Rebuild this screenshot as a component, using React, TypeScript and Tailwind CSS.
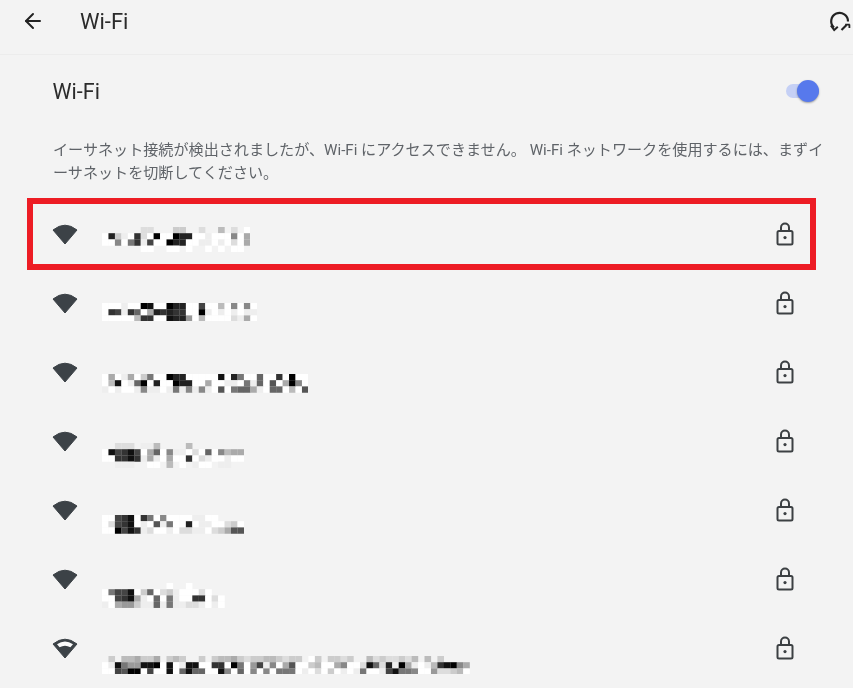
import { ArrowLeft } from "lucide-react";

// blurred network names: one hex digit per cell, f = white, 0 = black, . = page background
const networks = [
  {
    weak: false,
    shift: 4,
    rows: [
      "......dd...cc..d..b.d.f",
      "f2cef3df0ff022ffefff8fa",
      "ff8f73e4ff022ffeefefdfa",
      "......ff..ff.f..f.f.ff.",
    ],
  },
  {
    weak: false,
    shift: 7.5,
    rows: [
      "fffeff01ff022ff4ffbf8f8f",
      "f34e36fa23233ff0efefefee",
      "fffffb33ff1229fbffffdeaf",
    ],
  },
  {
    weak: false,
    shift: 10,
    rows: [
      "fafeafc7ff022fffff1f27ff6ff3f0ff",
      "fb1fe60f2ff022ffaffeef7e6f5fa08f",
      "efeffe8eefe7e8e8ef5f766aef66fbf5",
    ],
  },
  {
    weak: false,
    shift: 13,
    rows: [
      "..ddd.eeb....b........",
      "f14314fa6f8eefdf6f8baa",
      "ff3313eaefaff3fdeffeff",
      "..eee..ff.b.f.eff.ee..",
    ],
  },
  {
    weak: false,
    shift: 13,
    rows: [
      "ff431f37f8ffffeeff....",
      "fd431fef5e7ff2feeffdcf",
      "ff0413edffefddeefdca55",
    ],
  },
  {
    weak: false,
    shift: 15,
    rows: [
      "..........f..f..",
      "f7441fc6fdcefffdf",
      "ff431aef6f7eff33fdf",
      "efa99cee6e7eeddefef",
    ],
  },
  {
    weak: true,
    shift: 15.5,
    rows: [
      ".c.bbacca.cbc..c.cbbacdccbbcdcc.fc.ccdc..bdcddcdb.b.c....",
      "fe1799110f1fe11ff33f07f94e8fa5ffcbffa8ffd16d2e0aefeb3108a",
      "ff4500f4ff1f6166ff18f6f8f8f777fefdfcfefe7ffe41778ff9ddcbf",
    ],
  },
];

function Mosaic({ rows }: { rows: string[] }) {
  const cols = Math.max(...rows.map((r) => r.length));
  return (
    <svg width={cols * 6.45} height={rows.length * 6.2} className="block">
      {rows.map((row, y) =>
        row.split("").map((c, x) => {
          if (c === ".") return null;
          const v = parseInt(c, 16) * 17;
          return (
            <rect
              key={`${x}-${y}`}
              x={x * 6.45}
              y={y * 6.2}
              width={6.6}
              height={6.35}
              fill={`rgb(${v},${v},${v})`}
            />
          );
        })
      )}
    </svg>
  );
}

function WifiIcon({ weak }: { weak: boolean }) {
  return (
    <svg width="26" height="22" viewBox="0 0 26 22" className="block">
      <path
        d="M1 7Q13 -2.6 25 7L13 21Z"
        fill="#3c4247"
        stroke="#3c4247"
        strokeWidth="1"
        strokeLinejoin="round"
      />
      {weak && <path d="M5 7.2Q13 1.6 21 7.2L18.4 10.3Q13 7.2 7.6 10.3Z" fill="#fbfbfb" />}
    </svg>
  );
}

function LockIcon() {
  return (
    <svg width="18" height="24" viewBox="0 0 18 24" fill="none" stroke="#3c4043" strokeWidth="2" className="block">
      <rect x="1.5" y="9" width="15" height="13.5" rx="1.5" />
      <path d="M5 9V5.5a4 4 0 0 1 8 0V9" />
      <circle cx="9" cy="15.6" r="1.6" fill="#3c4043" stroke="none" />
    </svg>
  );
}

function SyncIcon() {
  return (
    <svg width="22" height="24" viewBox="0 0 22 24" fill="none" stroke="#222" strokeWidth="2.2" className="block">
      <path d="M5 18.5A8.4 8.4 0 1 1 19 12.5" />
      <path d="M1.8 16.5l3.4 4.5 3.6-3.2" strokeWidth="2" />
      <path d="M12.5 21l5-5" strokeWidth="2.2" />
      <path d="M16.2 15.6h4.6M20.4 15.6v3.4" strokeWidth="1.8" />
    </svg>
  );
}

export default function App() {
  return (
    <div
      className="relative h-[688px] w-[853px] overflow-hidden bg-[#f3f3f3]"
      style={{ fontFamily: '"Roboto", "Noto Sans CJK JP", sans-serif' }}
    >
      <header className="flex h-[55px] items-center border-b border-[#ececec] pb-[12px] pl-[21px] pr-[2px]">
        <ArrowLeft size={24} strokeWidth={2} color="#222" />
        <span className="ml-[35px] text-[22px] text-[#2b2b2b] blur-[0.3px]">Wi-Fi</span>
        <div className="ml-auto">
          <SyncIcon />
        </div>
      </header>

      <div className="flex h-[74px] items-center pl-[52.5px] pr-[34px]">
        <span className="text-[21.5px] text-[#2b2b2b] blur-[0.3px]">Wi-Fi</span>
        <div className="relative mb-[2px] ml-auto h-[14px] w-[33px] rounded-full bg-[#c5d0f5]">
          <div className="absolute right-0 top-[-4px] h-[22px] w-[22px] rounded-full bg-[#5779ec] shadow-[0_1px_2px_rgba(0,0,0,0.35)]" />
        </div>
      </div>

      <p className="ml-[53px] mr-[27px] mt-[10px] h-[54px] text-[15.1px] leading-[23px] text-[#5f6368] blur-[0.3px]">
        イーサネット接続が検出されましたが、Wi-Fi にアクセスできません。 Wi-Fi ネットワークを使用するには、まずイーサネットを切断してください。
      </p>

      <div className="mt-[8px]">
        {networks.map((n, i) => (
          <div key={i} className="flex h-[69px] items-center pl-[52px] pr-[59px]">
            <div className="w-[50px] shrink-0 pb-[3px]">
              <WifiIcon weak={n.weak} />
            </div>
            <div style={{ marginTop: n.shift * 2 }}>
              <Mosaic rows={n.rows} />
            </div>
            <div className="ml-auto pb-[4px]">
              <LockIcon />
            </div>
          </div>
        ))}
      </div>

      <div className="absolute left-[27px] top-[198px] h-[72px] w-[789px] border-[6px] border-[#ed1c24]" />
    </div>
  );
}
